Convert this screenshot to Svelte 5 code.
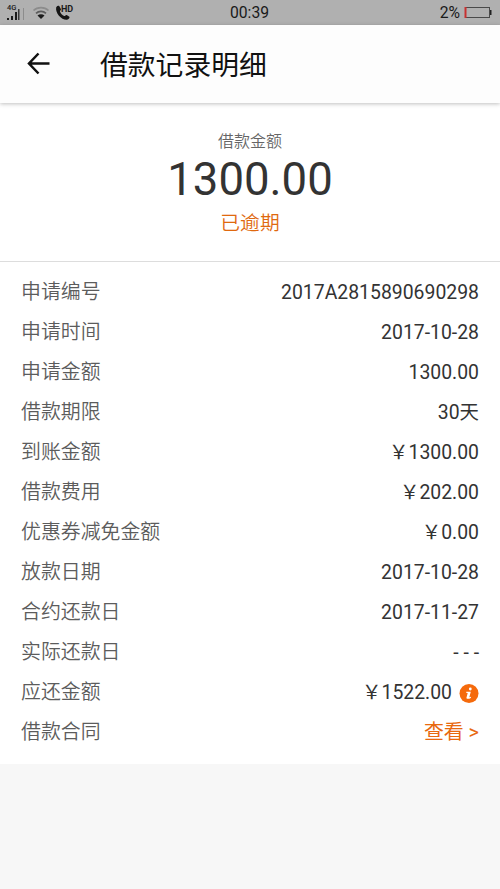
<script lang="ts">
  type Row = {
    label: string;
    value: string;
    info?: boolean;
    link?: boolean;
  };

  const rows: Row[] = [
    { label: '申请编号', value: '2017A2815890690298' },
    { label: '申请时间', value: '2017-10-28' },
    { label: '申请金额', value: '1300.00' },
    { label: '借款期限', value: '30天' },
    { label: '到账金额', value: '￥1300.00' },
    { label: '借款费用', value: '￥202.00' },
    { label: '优惠券减免金额', value: '￥0.00' },
    { label: '放款日期', value: '2017-10-28' },
    { label: '合约还款日', value: '2017-11-27' },
    { label: '实际还款日', value: '- - -' },
    { label: '应还金额', value: '￥1522.00', info: true },
    { label: '借款合同', value: '查看 >', link: true },
  ];
</script>

<div class="screen">
  <div class="status-bar">
    <div class="status-left">
      <div class="signal">
        <span class="network">4G</span>
        <svg width="19" height="17" viewBox="0 0 19 17">
          <path d="M1 14h2v2H1zM5 12h2v4H5zM9 8h2v8H9z" fill="#1c1c1c" />
          <path d="M12 5h1.500v11H12z" fill="#3a3a3a" />
          <path d="M17 4h1v12h-1z" fill="#8c8c8c" />
        </svg>
      </div>
      <svg width="18" height="14" viewBox="0 0 18 14" fill="none" stroke-width="1.700">
        <path d="M1.500 4.500C5.500 .7 12.500 .7 16.500 4.500" stroke="#8c8c8c" />
        <path d="M4 7.300C6.800 4.700 11.200 4.700 14 7.300" stroke="#5c5c5c" />
        <path d="M5.500 9.500C7.500 7.700 10.500 7.700 12.500 9.500L9 13z" fill="#1c1c1c" />
      </svg>
      <div class="call">
        <svg width="17" height="16" viewBox="0 0 17 16">
          <path d="M1.200 2.200C2.200.8 3.600.5 4.400 1.200L6 4.200C6 5.200 4.700 5.700 5 6.600C5.700 8.700 7.200 10.300 9.200 11C10.200 11.200 10.700 9.700 11.700 10L14.400 11.800C15 12.800 13.700 14.400 12 14.800C6.500 15.200 0 8 1.200 2.200z" fill="#151515" />
        </svg>
        <span class="hd">HD</span>
      </div>
    </div>
    <div class="clock">00:39</div>
    <div class="battery">
      <span>2%</span>
      <svg width="29" height="13" viewBox="0 0 29 13">
        <rect x="1.500" y="1.500" width="24" height="10" fill="none" stroke="#4a4a4a" />
        <path d="M26 4h1.500v5H26z" fill="#222" />
        <path d="M.5 1h2v11h-2z" fill="#c83030" />
      </svg>
    </div>
  </div>

  <header class="header">
    <svg width="24" height="24" viewBox="0 0 24 24" fill="none" stroke="#111" stroke-width="2.500">
      <path d="M23.500 11.500H3.500M12.500 1.500L3 11.500L12.500 21.500" />
    </svg>
    <h1>借款记录明细</h1>
  </header>

  <section class="summary">
    <div class="caption">借款金额</div>
    <div class="amount">1300.00</div>
    <div class="state">已逾期</div>
  </section>

  <section class="details">
    {#each rows as row}
      <div class="row">
        <span class="label">{row.label}</span>
        <span class="value" class:link={row.link}>
          <span>{row.value}</span>
          {#if row.info}
            <svg width="20" height="20" viewBox="0 0 20 20">
              <circle cx="10" cy="10.500" r="9.500" fill="#f56a0c" />
              <circle cx="11.300" cy="6" r="1.400" fill="#fff" />
              <path d="M7.300 8.800h4.500l-1.500 5.500 1.800-.5-.3 1.100c-1.300.8-2.600 1.100-3.900.9l-.5-.8 1.300-5-1.600-.3z" fill="#fff" />
            </svg>
          {/if}
        </span>
      </div>
    {/each}
  </section>
</div>

<style>
  :global(body) {
    background: #f7f7f7;
  }

  .screen {
    min-height: 889px;
    background: #f7f7f7;
    font-family: Roboto, 'Noto Sans CJK SC', sans-serif;
    color: #333;
  }

  .status-bar {
    display: grid;
    grid-template-columns: 1fr auto 1fr;
    align-items: center;
    height: 25px;
    padding: 0 7px 0 6px;
    background: #b0b0b0;
    color: #1a1a1a;
    font-size: 15.700px;
  }

  .status-left {
    display: flex;
    align-items: center;
    gap: 7px;
  }

  .signal {
    display: flex;
    position: relative;
  }

  .network {
    position: absolute;
    top: 0;
    left: 1px;
    font-size: 7.500px;
    font-weight: 500;
    line-height: 8px;
  }

  .call {
    display: flex;
    position: relative;
    margin-left: -2px;
  }

  .hd {
    position: absolute;
    top: 0;
    left: 6px;
    font-size: 9px;
    font-weight: 700;
    line-height: 9px;
  }

  .battery {
    display: flex;
    align-items: center;
    justify-content: flex-end;
    gap: 4px;
  }

  .header {
    display: flex;
    align-items: center;
    position: relative;
    height: 78px;
    padding-left: 26px;
    background: #fdfdfd;
    box-shadow: 0 1px 4px rgba(0, 0, 0, 0.25);
  }

  h1 {
    margin: 4px 0 0 50px;
    font-size: 27.800px;
    font-weight: 400;
    line-height: 40px;
    color: #111;
  }

  .summary {
    height: 158px;
    border-bottom: 1px solid #ddd;
    background: #fff;
    text-align: center;
  }

  .caption {
    padding-top: 28px;
    font-size: 16px;
    font-weight: 350;
    line-height: 22px;
    color: #666;
  }

  .amount {
    font-size: 45.500px;
    line-height: 53px;
  }

  .state {
    padding-top: 3px;
    font-size: 19.800px;
    font-weight: 350;
    line-height: 30px;
    color: #e0690f;
  }

  .details {
    padding: 11px 21px;
    background: #fff;
  }

  .row {
    display: flex;
    align-items: center;
    justify-content: space-between;
    height: 40px;
    line-height: 24px;
  }

  .label {
    font-size: 19.900px;
    font-weight: 350;
    color: #5c5c5c;
  }

  .value {
    display: flex;
    align-items: center;
    gap: 7px;
    font-size: 19.400px;
  }

  .link {
    font-size: 19.900px;
    color: #e8690f;
  }
</style>
